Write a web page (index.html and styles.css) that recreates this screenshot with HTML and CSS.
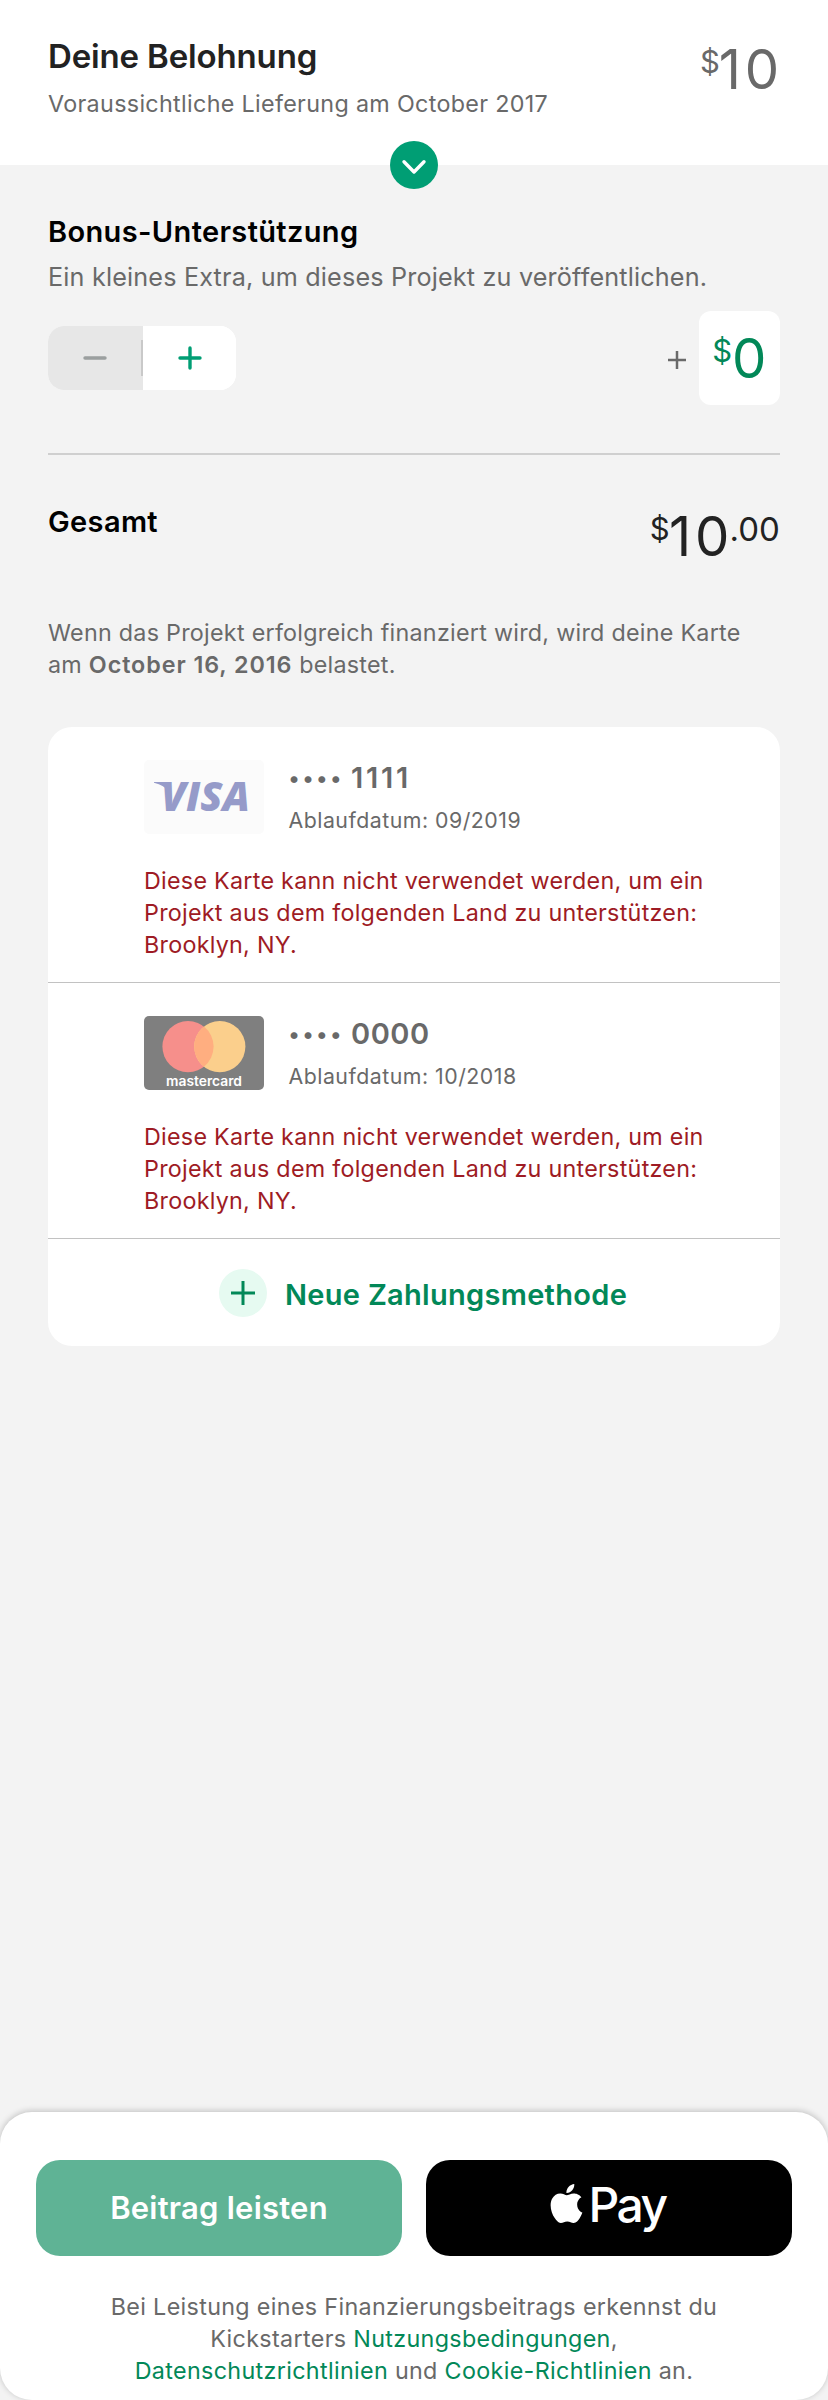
FILE: index.html
```html
<!DOCTYPE html>
<html lang="de">
<head>
<meta charset="utf-8">
<title>Deine Belohnung</title>
<link rel="stylesheet" href="styles.css">
</head>
<body>
<div class="screen">
  <header class="reward">
    <div>
      <h1 class="reward-title">Deine Belohnung</h1>
      <p class="reward-date">Voraussichtliche Lieferung am October 2017</p>
    </div>
    <div class="price price-reward"><span class="cur">$</span><span class="num">10</span></div>
    <button class="toggle" aria-label="Details">
      <svg width="48" height="48" viewBox="0 0 48 48" fill="none" stroke="#fff" stroke-width="3.4" stroke-linecap="round" stroke-linejoin="round"><path d="M14 20.8 24 31 34 20.8"/></svg>
    </button>
  </header>

  <main class="content">
    <h2 class="heading">Bonus-Unterstützung</h2>
    <p class="lead">Ein kleines Extra, um dieses Projekt zu veröffentlichen.</p>

    <div class="bonus">
      <div class="stepper">
        <button class="step step-minus" aria-label="Weniger"><svg width="24" height="24" viewBox="0 0 24 24"><path d="M2 12H22" stroke="#9b9f9f" stroke-width="3.4" stroke-linecap="round"/></svg></button>
        <button class="step step-plus" aria-label="Mehr"><svg width="24" height="24" viewBox="0 0 24 24"><path d="M2 12H22M12 2V22" stroke="#009e74" stroke-width="3.4" stroke-linecap="round"/></svg></button>
      </div>
      <div class="amount">
        <svg class="amount-plus" width="18" height="18" viewBox="0 0 18 18"><path d="M0 9H18M9 0V18" stroke="#696969" stroke-width="2.5"/></svg>
        <div class="price price-bonus"><span class="cur">$</span><span class="num">0</span></div>
      </div>
    </div>

    <div class="total">
      <h2 class="heading">Gesamt</h2>
      <div class="price price-total"><span class="cur">$</span><span class="num">10</span><span class="cents">.00</span></div>
    </div>

    <p class="notice">Wenn das Projekt erfolgreich finanziert wird, wird deine Karte<br>am <strong>October 16, 2016</strong> belastet.</p>

    <ul class="cards">
      <li class="card">
        <div class="card-head">
          <svg class="brand" width="120" height="74" viewBox="0 0 120 74">
            <rect width="120" height="74" rx="5" fill="#fbfbfb"/>
            <path d="M10 22H24L27 33Q20 25 10 22.8Z" fill="#969bc9"/>
            <text class="visa" x="17" y="51.2" textLength="89" lengthAdjust="spacingAndGlyphs">VISA</text>
          </svg>
          <div>
            <p class="card-number"><span class="dots">••••</span><span class="digits ones">1111</span></p>
            <p class="card-expiry">Ablaufdatum: 09/2019</p>
          </div>
        </div>
        <p class="card-error">Diese Karte kann nicht verwendet werden, um ein<br>Projekt aus dem folgenden Land zu unterstützen:<br>Brooklyn, NY.</p>
      </li>
      <li class="card">
        <div class="card-head">
          <svg class="brand" width="120" height="74" viewBox="0 0 120 74">
            <rect width="120" height="74" rx="5" fill="#7f7f7f"/>
            <circle cx="44" cy="30.6" r="25.6" fill="#f68f8b"/>
            <circle cx="75.8" cy="30.6" r="25.6" fill="#fbcf8c"/>
            <path d="M59.9 10.54A25.6 25.6 0 0 1 59.9 50.66A25.6 25.6 0 0 1 59.9 10.54Z" fill="#ffae80"/>
            <text class="mastercard" x="22" y="69.5" textLength="76" lengthAdjust="spacingAndGlyphs">mastercard</text>
          </svg>
          <div>
            <p class="card-number"><span class="dots">••••</span><span class="digits">0000</span></p>
            <p class="card-expiry">Ablaufdatum: 10/2018</p>
          </div>
        </div>
        <p class="card-error">Diese Karte kann nicht verwendet werden, um ein<br>Projekt aus dem folgenden Land zu unterstützen:<br>Brooklyn, NY.</p>
      </li>
      <li class="add">
        <svg width="48" height="48" viewBox="0 0 48 48"><circle cx="24" cy="24" r="24" fill="#e6faf1"/><path d="M12 24H36M24 12V36" stroke="#028858" stroke-width="3"/></svg>
        <span class="add-label">Neue Zahlungsmethode</span>
      </li>
    </ul>
  </main>

  <footer class="footer">
    <div class="actions">
      <button class="btn btn-pledge">Beitrag leisten</button>
      <button class="btn btn-apple">
        <svg class="apple" width="39" height="39" viewBox="0 0 24 24" fill="#fff"><path d="M12.152 6.896c-.948 0-2.415-1.078-3.96-1.04-2.04.027-3.91 1.183-4.961 3.014-2.117 3.675-.546 9.103 1.519 12.09 1.013 1.454 2.208 3.09 3.792 3.039 1.52-.065 2.09-.987 3.935-.987 1.831 0 2.35.987 3.96.948 1.637-.026 2.676-1.48 3.676-2.948 1.156-1.688 1.636-3.325 1.662-3.415-.039-.013-3.182-1.221-3.22-4.857-.026-3.04 2.48-4.494 2.597-4.559-1.429-2.09-3.623-2.324-4.39-2.376-2-.156-3.675 1.09-4.61 1.09zM15.53 3.83c.843-1.012 1.4-2.427 1.245-3.83-1.207.052-2.662.805-3.532 1.818-.78.896-1.454 2.338-1.273 3.714 1.338.104 2.715-.688 3.559-1.701"/></svg>
        <span class="pay">Pay</span>
      </button>
    </div>
    <p class="legal">Bei Leistung eines Finanzierungsbeitrags erkennst du<br>Kickstarters <a>Nutzungsbedingungen</a>,<br><a>Datenschutzrichtlinien</a> und <a>Cookie-Richtlinien</a> an.</p>
  </footer>
</div>
</body>
</html>
```
FILE: styles.css
```css
* { box-sizing: border-box; margin: 0; padding: 0; }

body {
  background: #f3f3f3;
  color: #696969;
  font-family: Inter, "Liberation Sans", sans-serif;
}

svg { display: block; }

button { border: 0; font: inherit; }

.screen {
  width: 828px;
  height: 2400px;
  display: flex;
  flex-direction: column;
  overflow: hidden;
}

/* Reward header */
.reward {
  position: relative;
  display: flex;
  justify-content: space-between;
  height: 165px;
  padding: 36px 48px 0;
  background: #fff;
}

.reward-title {
  font-size: 33px;
  font-weight: 600;
  line-height: 40px;
  letter-spacing: -0.15px;
  color: #222;
}

.reward-date {
  margin-top: 11.5px;
  font-size: 23.3px;
  line-height: 32px;
  letter-spacing: 0.33px;
}

.toggle {
  position: absolute;
  left: 390px;
  bottom: -24px;
  width: 48px;
  height: 48px;
  border-radius: 50%;
  background: #009e74;
}

/* Prices */
.price {
  display: flex;
  align-items: baseline;
  height: 56px;
  font-size: 54.5px;
  line-height: 56px;
}

.cur { font-size: 31px; transform: translateY(-16px); }
.cents { font-size: 33px; letter-spacing: 0.1px; transform: translateY(-15px); }
.num { letter-spacing: 3.8px; }
.price-reward { margin-top: 5px; }
.price-reward .num { margin-left: -1px; margin-right: -3px; }
.price-bonus .num { letter-spacing: 0; }
.price-total .num { margin-left: -0.5px; margin-right: -3.8px; }

.price-bonus {
  height: 94px;
  padding: 19px 13.6px 0 13px;
  border-radius: 12px;
  background: #fff;
  color: #028858;
}

.price-total { margin-top: 4px; color: #222; }

/* Content */
.content { padding: 49px 48px 0; }

.heading {
  font-size: 29px;
  font-weight: 600;
  line-height: 36px;
  letter-spacing: 0.36px;
  color: #000;
}

.lead {
  margin-top: 11px;
  font-size: 25.2px;
  line-height: 32px;
  letter-spacing: 0.17px;
}

.bonus {
  display: flex;
  justify-content: space-between;
  align-items: center;
  height: 94px;
  margin-top: 18px;
}

.stepper {
  position: relative;
  display: flex;
  width: 188px;
  height: 64px;
  border-radius: 16px;
  overflow: hidden;
  background: #fff;
}

.stepper::after {
  content: "";
  position: absolute;
  left: 93px;
  top: 14px;
  width: 2px;
  height: 36px;
  background: #c9c9c9;
}

.step {
  flex: 1;
  display: grid;
  place-items: center;
  background: #fff;
}

.step-minus { flex: 0 0 95px; padding-right: 2px; background: #e7e7e7; }

.amount { display: flex; align-items: center; }
.amount-plus { margin: 4px 13px 0 0; }

.total {
  display: flex;
  justify-content: space-between;
  margin-top: 48px;
  padding-top: 49px;
  height: 164px;
  border-top: 2px solid #cfcfcf;
}

.notice {
  font-size: 23.3px;
  line-height: 32px;
  letter-spacing: 0.27px;
}

.notice strong { font-weight: 600; letter-spacing: 0.93px; }

/* Payment methods */
.cards {
  margin-top: 46px;
  border-radius: 24px;
  background: #fff;
  list-style: none;
}

.card {
  height: 256px;
  padding: 33px 0 0 96px;
  border-bottom: 1px solid #c2c2c2;
}

.card-head { display: flex; gap: 24.5px; height: 74px; }

.card-number {
  display: flex;
  font-size: 29px;
  font-weight: 600;
  line-height: 36px;
}

.dots { font-size: 22px; letter-spacing: 2.8px; transform: translateY(-0.5px); }
.digits { margin-left: 7px; letter-spacing: 0.54px; }
.ones { letter-spacing: 2.74px; }

.card-expiry {
  margin-top: 10px;
  font-size: 21.3px;
  line-height: 28px;
  letter-spacing: 0.5px;
}

.card-error {
  margin-top: 30.5px;
  font-size: 23.3px;
  line-height: 32px;
  letter-spacing: 0.27px;
  color: #9e1b24;
}

.visa { font: italic 800 41px "Open Sans", sans-serif; fill: #969bc9; }
.mastercard { font: 600 13.5px Inter, sans-serif; fill: #fff; }

.add {
  display: flex;
  gap: 18px;
  height: 107px;
  padding: 30px 0 0 171px;
}

.add-label {
  margin-top: 8px;
  font-size: 29px;
  font-weight: 600;
  line-height: 36px;
  letter-spacing: 0.3px;
  color: #028858;
}

/* Footer */
.footer {
  height: 288px;
  margin-top: auto;
  padding: 48px 36px 0;
  border-radius: 32px;
  background: #fff;
  box-shadow: 0 -1px 6px rgba(0, 0, 0, 0.22);
}

.actions { display: grid; grid-template-columns: 1fr 1fr; gap: 24px; }

.btn { height: 96px; border-radius: 24px; color: #fff; }

.btn-pledge {
  background: #5fb395;
  font-size: 31px;
  font-weight: 600;
  line-height: 96px;
  letter-spacing: 0.22px;
}

.btn-apple {
  display: flex;
  align-items: flex-start;
  gap: 2.6px;
  padding-left: 121px;
  background: #000;
}

.apple { margin-top: 24px; }
.pay { font-size: 48px; font-weight: 500; line-height: 89px; letter-spacing: -2.6px; }

.legal {
  margin-top: 34.5px;
  font-size: 23.3px;
  line-height: 32px;
  letter-spacing: 0.34px;
  text-align: center;
}

.legal a { color: #028858; }
```
